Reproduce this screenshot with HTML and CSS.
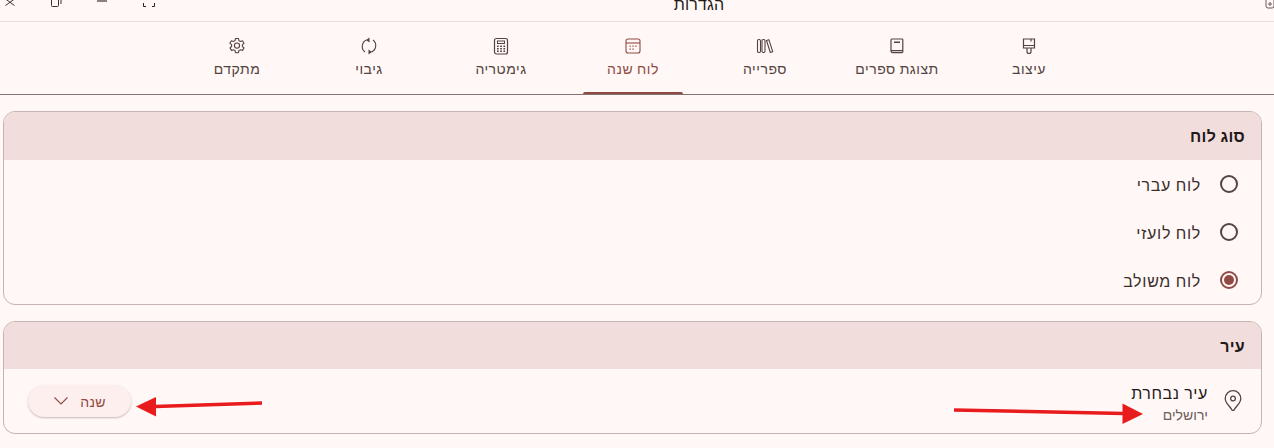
FILE: index.html
```html
<!DOCTYPE html>
<html lang="he" dir="rtl">
<head>
<meta charset="utf-8">
<title>הגדרות</title>
<link rel="stylesheet" href="styles.css">
</head>
<body>
<div class="app">
  <header class="titlebar">
    <svg class="corner-icon" width="10" height="10" viewBox="0 0 10 10"><rect x="1" y="-2" width="8" height="10" rx="2" fill="none" stroke="#6b5b59" stroke-width="1"/><path d="M3 4h4M5 2v4" stroke="#6b5b59" stroke-width="1"/></svg>
    <div class="title">הגדרות</div>
    <div class="controls">
      <svg class="ctl-full" width="14" height="8" viewBox="0 0 14 8"><path d="M1.500 3v3.500h2.500M12.500 3v3.500h-2.500" fill="none" stroke="#2c2221" stroke-width="1"/></svg>
      <svg class="ctl-min" width="12" height="4" viewBox="0 0 12 4"><path d="M1 1h10" stroke="#8a8080" stroke-width="2"/></svg>
      <svg class="ctl-restore" width="12" height="8" viewBox="0 0 12 8"><path d="M1.500 0v5.500a1 1 0 0 0 1 1h5a1 1 0 0 0 1-1V0M11 0v4" fill="none" stroke="#3a3030" stroke-width="1"/></svg>
      <svg class="ctl-close" width="12" height="6" viewBox="0 0 12 6"><path d="M1.500 -1l9 6.500M10.500 -1l-9 6.500" fill="none" stroke="#3a3030" stroke-width="1"/></svg>
    </div>
  </header>

  <nav class="tabs">
    <div class="tab">
      <svg class="tab-icon" width="20" height="20" viewBox="0 0 20 20"><path d="M4.500 3v9h11V3zM4.500 9.500h11M8 12v3.500a2 2 0 0 0 4 0V12M12 3v2.500" fill="none" stroke="currentColor" stroke-width="1.200"/></svg>
      <span>עיצוב</span>
    </div>
    <div class="tab">
      <svg class="tab-icon" width="20" height="20" viewBox="0 0 20 20"><path d="M5 3h10a.8.8 0 0 1 .8.8v12a.8.8 0 0 1-.8.8H5.500A1.500 1.500 0 0 1 4 15.100V4a1 1 0 0 1 1-1zM4 14.700h11.800" fill="none" stroke="currentColor" stroke-width="1.200"/><path d="M7 5.500h6v1.500H7z" fill="currentColor"/></svg>
      <span>תצוגת ספרים</span>
    </div>
    <div class="tab">
      <svg class="tab-icon" width="20" height="20" viewBox="0 0 20 20"><rect x="2.500" y="3.500" width="3" height="13" rx="1.200" fill="none" stroke="currentColor" stroke-width="1.100"/><rect x="7" y="3.500" width="3" height="13" rx="1.200" fill="none" stroke="currentColor" stroke-width="1.100"/><path d="M11.500 4.500l2.400-.8 3.800 12-2.400.8z" fill="none" stroke="currentColor" stroke-width="1.100" stroke-linejoin="round"/></svg>
      <span>ספרייה</span>
    </div>
    <div class="tab active">
      <svg class="tab-icon" width="20" height="20" viewBox="0 0 20 20"><rect x="3" y="3" width="14" height="14" rx="2" fill="none" stroke="currentColor" stroke-width="1.100"/><path d="M3 7h14" stroke="currentColor" stroke-width="1.100"/><path d="M6.500 9.500h1.300v1.300H6.500zM9.400 9.500h1.300v1.300H9.400zM12.300 9.500h1.300v1.300h-1.300zM6.500 12.500h1.300v1.300H6.500zM9.400 12.500h1.300v1.300H9.400z" fill="currentColor"/></svg>
      <span>לוח שנה</span>
    </div>
    <div class="tab">
      <svg class="tab-icon" width="20" height="20" viewBox="0 0 20 20"><rect x="3.500" y="2.500" width="13" height="15.500" rx="2" fill="none" stroke="currentColor" stroke-width="1.200"/><rect x="6.500" y="5" width="7" height="2.500" fill="none" stroke="currentColor" stroke-width="1"/><path d="M6 9.500h1.700v1.500H6zM9.200 9.500h1.700v1.500H9.200zM12.400 9.500h1.700v1.500h-1.700zM6 12h1.700v1.500H6zM9.200 12h1.700v1.500H9.200zM12.400 12h1.700v1.500h-1.700zM6 14.500h1.700V16H6zM9.200 14.500h1.700V16H9.200zM12.400 14.500h1.700V16h-1.700z" fill="currentColor"/></svg>
      <span>גימטריה</span>
    </div>
    <div class="tab">
      <svg class="tab-icon" width="20" height="20" viewBox="0 0 20 20"><path d="M7.500 4A7 7 0 0 0 6 16M12.500 16A7 7 0 0 0 14 4" fill="none" stroke="currentColor" stroke-width="1.100"/><path d="M10.500 1.500L7 4l3.500 2.500zM9.500 18.500l3.500-2.500-3.500-2.500z" fill="currentColor"/></svg>
      <span>גיבוי</span>
    </div>
    <div class="tab">
      <svg class="tab-icon" width="20" height="20" viewBox="0 0 20 20"><path d="M8.500 2.500h3l.4 2.100 1.500.9 2.100-.7 1.500 2.500-1.600 1.400v1.800l1.600 1.400-1.500 2.500-2.100-.7-1.500.9-.4 2.100h-3l-.4-2.100-1.500-.9-2.100.7-1.500-2.500 1.600-1.400V8.700L2.900 7.300l1.500-2.500 2.100.7 1.500-.9z" fill="none" stroke="currentColor" stroke-width="1.100" stroke-linejoin="round"/><circle cx="10" cy="9.600" r="2.600" fill="none" stroke="currentColor" stroke-width="1.100"/></svg>
      <span>מתקדם</span>
    </div>
  </nav>

  <main class="content">
    <section class="card">
      <h2 class="card-head">סוג לוח</h2>
      <div class="radio-list">
        <div class="radio-row"><span class="radio"></span><span class="row-label">לוח עברי</span></div>
        <div class="radio-row"><span class="radio"></span><span class="row-label">לוח לועזי</span></div>
        <div class="radio-row"><span class="radio checked"></span><span class="row-label">לוח משולב</span></div>
      </div>
    </section>
    <section class="card">
      <h2 class="card-head card-head-short">עיר</h2>
      <div class="city-row">
        <svg class="pin" width="22" height="26" viewBox="0 0 20 24"><path d="M10 2.500a7.200 7.200 0 0 0-7.200 7.200c0 1.800.7 3.200 1.800 4.700 1.500 2 3.500 4 4.300 5.600a1.200 1.200 0 0 0 2.200 0c.8-1.600 2.800-3.600 4.300-5.600 1.100-1.500 1.800-2.900 1.800-4.700A7.200 7.200 0 0 0 10 2.500z" fill="none" stroke="currentColor" stroke-width="1.200"/><circle cx="10" cy="9.700" r="2.200" fill="none" stroke="currentColor" stroke-width="1.200"/></svg>
        <div class="city-text">
          <div class="city-title">עיר נבחרת</div>
          <div class="city-sub">ירושלים</div>
        </div>
        <button class="dropdown" type="button">
          <span class="dropdown-label">שנה</span>
          <svg width="16" height="10" viewBox="0 0 16 10"><path d="M1.500 1.500L8 8l6.500-6.500" fill="none" stroke="currentColor" stroke-width="1.100"/></svg>
        </button>
      </div>
    </section>
  </main>
</div>
<svg class="arrows" width="1274" height="448" viewBox="0 0 1274 448">
  <path d="M262 403L155 406.500" stroke="#e81c1c" stroke-width="3.500"/>
  <path d="M136 406.500L156 397V416.500z" fill="#e81c1c"/>
  <path d="M954 410L1124 413.500" stroke="#e81c1c" stroke-width="3.500"/>
  <path d="M1143 414L1122.500 403.500V424z" fill="#e81c1c"/>
</svg>
</body>
</html>
```
FILE: styles.css
```css
* { box-sizing: border-box; }
html, body { margin: 0; padding: 0; }
body {
  width: 1274px;
  height: 448px;
  overflow: hidden;
  position: relative;
  background: #fff8f6;
  color: #231918;
  font-family: Roboto, "Noto Sans", "Liberation Sans", sans-serif;
}
.app { display: flex; flex-direction: column; height: 448px; }

.titlebar {
  flex: none;
  height: 22px;
  border-bottom: 1px solid #ebdcda;
  display: grid;
  grid-template-columns: 8px 1fr;
  position: relative;
  overflow: hidden;
}
.corner-icon { display: block; margin-right: -1px; }
.title {
  position: absolute;
  top: -5px;
  left: 600px;
  width: 198px;
  text-align: center;
  font-size: 16px;
  line-height: 20px;
  letter-spacing: .15px;
}
.controls {
  position: absolute;
  top: 0;
  left: 0;
  direction: ltr;
  display: flex;
  align-items: flex-start;
  flex-direction: row-reverse;
  width: 162px;
  justify-content: space-between;
  padding: 0 6px 0 4px;
}
.controls svg { display: block; }

.tabs {
  flex: none;
  width: 1274px;
  height: 73px;
  border-bottom: 1px solid #857371;
  display: flex;
  justify-content: center;
  padding-right: 8px;
}
.tab {
  width: 132px;
  height: 72px;
  display: flex;
  flex-direction: column;
  align-items: center;
  padding-top: 14px;
  gap: 3px;
  color: #534341;
  font-size: 14px;
  line-height: 20px;
  letter-spacing: .5px;
  position: relative;
}
.tab-icon { display: block; }
.tab.active { color: #904a43; }
.tab.active::after {
  content: "";
  position: absolute;
  bottom: 0;
  left: 16px;
  right: 16px;
  height: 2px;
  border-radius: 2px 2px 0 0;
  background: #904a43;
}

.content {
  flex: 1;
  padding: 16px 12px 0 3px;
  display: flex;
  flex-direction: column;
  gap: 16px;
}
.card {
  border: 1px solid #c6b3b0;
  border-radius: 12px;
  overflow: hidden;
}
.card-head {
  margin: 0;
  height: 48px;
  background: #f1dedc;
  padding: 2px 16px 0 17px;
  display: flex;
  align-items: center;
  font-size: 16px;
  font-weight: 700;
  line-height: 24px;
  letter-spacing: .3px;
}
.card-head-short { height: 47px; }
.radio-list { display: flex; flex-direction: column; }
.radio-row {
  height: 48px;
  display: flex;
  align-items: center;
  padding-right: 23px;
  gap: 19px;
}
.radio {
  width: 18px;
  height: 18px;
  border: 2px solid #534341;
  border-radius: 50%;
  flex: none;
}
.radio.checked {
  border-color: #904a43;
  position: relative;
}
.radio.checked::after {
  content: "";
  position: absolute;
  inset: 2px;
  border-radius: 50%;
  background: #904a43;
}
.row-label {
  font-size: 16px;
  line-height: 24px;
  letter-spacing: .7px;
  color: #3b2e2c;
  padding-top: 4px;
}

.city-row {
  height: 64px;
  display: flex;
  align-items: center;
  padding: 0 17px 0 24px;
  color: #534341;
}
.pin { flex: none; }
.city-text { margin-right: 14px; flex: 1; padding-top: 6px; }
.city-title { font-size: 16px; line-height: 22px; letter-spacing: .6px; color: #231918; }
.city-sub { font-size: 14px; line-height: 20px; color: #6d5d5b; }
.dropdown {
  flex: none;
  width: 103px;
  height: 32px;
  border: 0;
  border-radius: 16px;
  background: #fdefed;
  box-shadow: 0 1px 2px rgba(80, 40, 36, .3);
  display: flex;
  align-items: center;
  justify-content: center;
  gap: 11px;
  color: #904a43;
  font: 500 14px/20px Roboto, "Noto Sans", "Liberation Sans", sans-serif;
  letter-spacing: .4px;
}
.dropdown-label { padding-top: 2px; }
.dropdown svg { display: block; }
.arrows { position: absolute; top: 0; left: 0; pointer-events: none; }
```
